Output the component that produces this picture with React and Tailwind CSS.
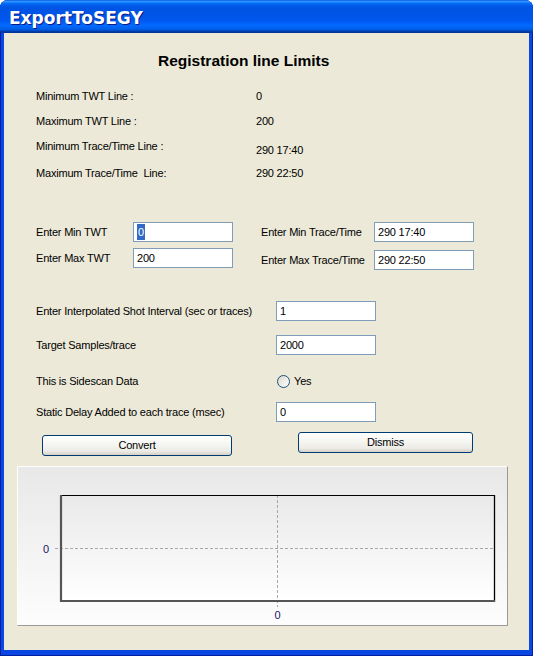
function Field({ children }) {
  return (
    <div className="flex h-[20px] w-[100px] items-center border border-[#7f9db9] bg-white pl-[3px] text-[11px] tracking-[-0.2px]">
      {children}
    </div>
  );
}

function XPButton({ children, className }) {
  return (
    <div
      className={
        "flex h-[21px] items-center justify-center rounded-[3px] border border-[#003c74] bg-[linear-gradient(180deg,#ffffff_0%,#f4f4f0_50%,#ecebe6_80%,#d6d0c5_100%)] text-[11px] " +
        className
      }
    >
      {children}
    </div>
  );
}

function Chart() {
  return (
    <svg width="491" height="160" viewBox="0 0 491 160" className="block">
      <defs>
        <linearGradient id="plotbg" x1="0" y1="0" x2="0" y2="1">
          <stop offset="0%" stopColor="#e9e9e9" />
          <stop offset="100%" stopColor="#ffffff" />
        </linearGradient>
      </defs>
      <rect x="43" y="28" width="433" height="106" fill="url(#plotbg)" />
      <line x1="37" y1="81.5" x2="476" y2="81.5" stroke="#a8a8a8" strokeWidth="1" strokeDasharray="3 2" />
      <line x1="259.5" y1="28" x2="259.5" y2="140" stroke="#a8a8a8" strokeWidth="1" strokeDasharray="3 2" />
      <line x1="43" y1="28.5" x2="477" y2="28.5" stroke="#000" strokeWidth="1" />
      <line x1="476.5" y1="28" x2="476.5" y2="135" stroke="#000" strokeWidth="1.3" />
      <line x1="43" y1="28" x2="43" y2="135" stroke="#555" strokeWidth="2.2" />
      <line x1="42" y1="134" x2="477" y2="134" stroke="#555" strokeWidth="2" />
      <text x="31" y="85.5" textAnchor="end" fontSize="11" fontFamily="Liberation Sans, Arial, sans-serif" fill="#1b1464">0</text>
      <text x="259.5" y="152" textAnchor="middle" fontSize="11" fontFamily="Liberation Sans, Arial, sans-serif" fill="#1b1464">0</text>
    </svg>
  );
}

export default function App() {
  return (
    <div className="h-[656px] w-[533px] bg-white font-['Liberation_Sans',Arial,sans-serif] text-[11px] tracking-[-0.2px] text-black">
      <div className="flex h-full flex-col overflow-hidden rounded-t-[8px] bg-[#0a47e2] shadow-[inset_1px_0_0_#0020a0,inset_-1px_0_0_#0020a0,inset_0_-1px_0_#0020a0]">
        <div className="flex h-[33px] shrink-0 items-center bg-[linear-gradient(180deg,#0058ee_0%,#3593ff_4%,#288eff_6%,#127dff_8%,#036ffc_10%,#0262ee_14%,#0057e5_20%,#0054e3_24%,#0055eb_56%,#005bf5_66%,#026afe_76%,#0062ef_86%,#0052d6_92%,#0040ab_94%,#003092_100%)] pl-[9px] pt-[4px]">
          <span className="font-['DejaVu_Sans',sans-serif] text-[17px] font-bold tracking-normal text-white [text-shadow:1px_1px_0_#0a1a80]">
            ExportToSEGY
          </span>
        </div>
        <div className="mx-[4px] mb-[6px] flex flex-1 flex-col bg-[#ece9d8]">
          <div className="mt-[19px] flex h-[18px] items-center pl-[154px] text-[15.5px] font-bold tracking-normal">
            Registration line Limits
          </div>

          <div className="flex flex-col pl-[32px]">
            <div className="mt-[13px] flex h-[26px] items-center">
              <div className="w-[220px]">Minimum TWT Line :</div>
              <div>0</div>
            </div>
            <div className="flex h-[25px] items-center">
              <div className="w-[220px]">Maximum TWT Line :</div>
              <div>200</div>
            </div>
            <div className="flex h-[26px] items-center">
              <div className="mb-[1px] w-[220px]">Minimum Trace/Time Line :</div>
              <div className="mt-[6px]">290 17:40</div>
            </div>
            <div className="flex h-[27px] items-center">
              <div className="w-[220px] whitespace-pre">Maximum Trace/Time  Line:</div>
              <div>290 22:50</div>
            </div>

            <div className="mt-[35px] flex h-[20px] items-center">
              <div className="w-[97px]">Enter Min TWT</div>
              <Field>
                <span className="bg-[#316ac5] px-[1px] text-white">0</span>
              </Field>
              <div className="ml-[28px] w-[113px]">Enter Min Trace/Time</div>
              <Field>290 17:40</Field>
            </div>
            <div className="mt-[6px] flex h-[22px] items-start">
              <div className="flex h-[20px] w-[97px] items-center">Enter Max TWT</div>
              <Field>200</Field>
              <div className="ml-[28px] mt-[2px] flex h-[20px] w-[113px] items-center">Enter Max Trace/Time</div>
              <div className="mt-[2px]">
                <Field>290 22:50</Field>
              </div>
            </div>

            <div className="mt-[31px] flex h-[20px] items-center">
              <div className="w-[240px]">Enter Interpolated Shot Interval (sec or traces)</div>
              <Field>1</Field>
            </div>
            <div className="mt-[14px] flex h-[20px] items-center">
              <div className="w-[240px]">Target Samples/trace</div>
              <Field>2000</Field>
            </div>
            <div className="mt-[16px] flex h-[20px] items-center">
              <div className="w-[241px]">This is Sidescan Data</div>
              <div className="h-[13px] w-[13px] rounded-full border border-[#1c5180] bg-[linear-gradient(135deg,#dcd7cb_0%,#ffffff_100%)]" />
              <div className="ml-[4px]">Yes</div>
            </div>
            <div className="mt-[11px] flex h-[20px] items-center">
              <div className="w-[240px]">Static Delay Added to each trace (msec)</div>
              <Field>0</Field>
            </div>

            <div className="mt-[10px] flex h-[24px] items-start">
              <XPButton className="ml-[6px] mt-[3px] w-[190px]">Convert</XPButton>
              <XPButton className="ml-[66px] w-[175px]">Dismiss</XPButton>
            </div>
          </div>

          <div className="ml-[13px] mt-[10px] h-[160px] w-[491px] border-b border-l border-r border-t border-b-[#9a9a9a] border-l-white border-r-[#9a9a9a] border-t-white bg-[linear-gradient(180deg,#e8e8e8_0%,#fdfdfd_100%)]">
            <Chart />
          </div>
        </div>
      </div>
    </div>
  );
}
